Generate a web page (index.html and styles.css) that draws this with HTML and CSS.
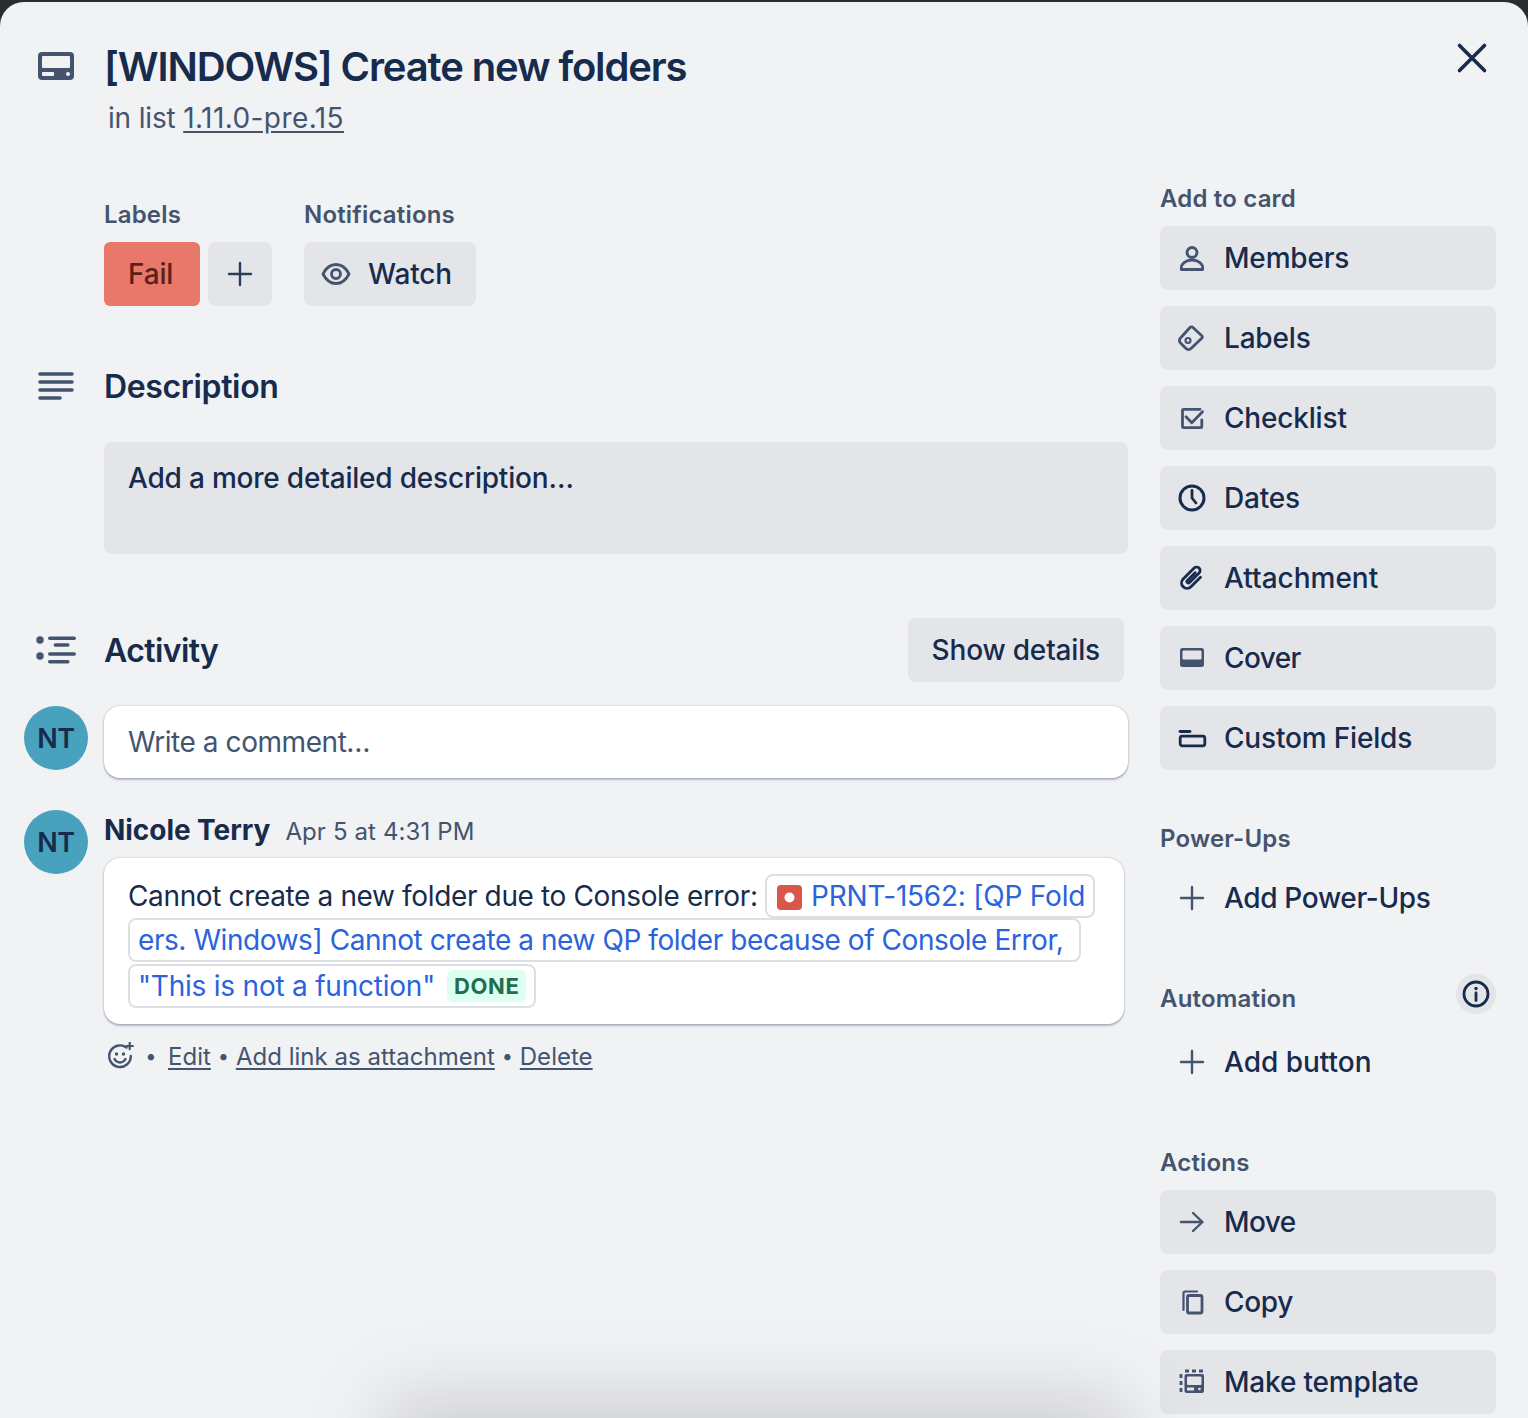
FILE: index.html
```html
<!DOCTYPE html>
<html lang="en">
<head>
<meta charset="utf-8">
<title>[WINDOWS] Create new folders</title>
<link rel="stylesheet" href="styles.css">
</head>
<body>
<div class="modal">
  <button class="close" aria-label="Close">
    <svg width="32" height="32" viewBox="0 0 32 32"><path d="M3.500 3.500l25 25M28.500 3.500l-25 25" class="st-dark st-35"/></svg>
  </button>

  <header class="head">
    <div class="gutter">
      <svg width="36" height="28" viewBox="0 0 36 28"><rect width="36" height="28" rx="4" class="f-sub"/><rect x="4" y="4" width="28" height="12" rx="1" class="f-page"/><rect x="4" y="20" width="12" height="4" rx="1" class="f-page"/><circle cx="30" cy="22" r="2" class="f-page"/></svg>
    </div>
    <div>
      <h1 class="title">[WINDOWS] Create new folders</h1>
      <p class="sub">in list <a class="u">1.11.0-pre.15</a></p>
    </div>
  </header>

  <div class="layout">
    <main class="main">
      <div class="meta">
        <div>
          <h3 class="cap">Labels</h3>
          <div class="meta-row">
            <span class="label">Fail</span>
            <button class="tile tile-sq"><svg width="32" height="32" viewBox="0 0 32 32"><path d="M16 5v22M5 16h22" class="st-mid st-24"/></svg></button>
          </div>
        </div>
        <div>
          <h3 class="cap">Notifications</h3>
          <div class="meta-row">
            <button class="btn btn-auto">
              <svg width="32" height="32" viewBox="0 0 32 32"><path d="M3 16c3-6 7.500-9.500 13-9.500S26 10 29 16c-3 6-7.500 9.500-13 9.500S6 22 3 16z" class="st-sub st-25"/><circle cx="16" cy="16" r="4.500" class="st-sub st-25"/></svg>
              Watch
            </button>
          </div>
        </div>
      </div>

      <section class="sec-desc">
        <div class="sec-head">
          <div class="gutter">
            <svg width="36" height="30" viewBox="0 0 36 30"><path d="M2 3h32M2 11h32M2 19h32M2 27h20" class="st-sub st-35"/></svg>
          </div>
          <h2 class="h2">Description</h2>
        </div>
        <div class="desc">Add a more detailed description…</div>
      </section>

      <section class="sec-act">
        <div class="sec-head">
          <div class="gutter">
            <svg width="42" height="30" viewBox="0 0 42 30"><circle cx="5" cy="5" r="3.700" class="f-sub"/><circle cx="5" cy="21" r="3.700" class="f-sub"/><path d="M14.800 3.300h24.400M20.400 10h12.400M14.800 19h24.400M14.800 26.700h18" class="st-sub st-35"/></svg>
          </div>
          <h2 class="h2 grow">Activity</h2>
          <button class="btn-text">Show details</button>
        </div>

        <div class="row row-write">
          <div class="avatar">NT</div>
          <div class="write">Write a comment…</div>
        </div>

        <div class="row row-comment">
          <div class="avatar">NT</div>
          <div class="comment-col">
            <div class="who"><strong class="name">Nicole Terry</strong><span class="time">Apr 5 at 4:31 PM</span></div>
            <div class="comment">Cannot create a new folder due to Console error: <a class="smart"><svg class="jira" width="25" height="25" viewBox="0 0 25 25"><rect width="25" height="25" rx="4" fill="#d9574a"/><circle cx="12.500" cy="12.500" r="5" fill="#fff"/></svg>PRNT-1562: [QP Fold<br><span class="tight">ers. Windows] Cannot create a new QP folder because of Console Error,&nbsp;</span><br>"This is not a function"<span class="done">DONE</span></a></div>
            <div class="actions">
              <svg class="emoji" width="28" height="28" viewBox="0 0 28 28"><path d="M20.500 5.600A10.800 10.800 0 1 0 24.800 14" class="st-sub st-24"/><circle cx="10.500" cy="12" r="1.700" class="f-sub"/><circle cx="17.500" cy="12" r="1.700" class="f-sub"/><path d="M8.500 17c1.300 2.300 3.300 3.500 5.500 3.500s4.200-1.200 5.500-3.500" class="st-sub st-24"/><path d="M23.700 0.800v6.400M20.500 4h6.400" class="st-sub st-2"/></svg>
              <span class="dot first">•</span><a class="u">Edit</a><span class="dot">•</span><a class="u">Add link as attachment</a><span class="dot">•</span><a class="u">Delete</a>
            </div>
          </div>
        </div>
      </section>
    </main>

    <aside class="side">
      <h3 class="cap">Add to card</h3>
      <div class="stack">
        <button class="btn"><svg width="32" height="32" viewBox="0 0 32 32"><circle cx="16" cy="10.500" r="5" class="st-sub st-25"/><path d="M5.300 27.500v-1.500c0-4.500 4.700-8 10.700-8s10.700 3.500 10.700 8v1.500z" class="st-sub st-25"/></svg>Members</button>
        <button class="btn"><svg width="32" height="32" viewBox="0 0 32 32"><path d="M14 5.500a2 2 0 0 1 3 0l9 8.500a1.500 1.500 0 0 1 0 2L15 26.500a3.500 3.500 0 0 1-5 0l-5.500-5.500a3.500 3.500 0 0 1 0-5z" class="st-sub st-25"/><circle cx="12" cy="18.500" r="2.500" class="st-sub st-2"/></svg>Labels</button>
        <button class="btn"><svg width="32" height="32" viewBox="0 0 32 32"><path d="M24 7.300H7.500a1 1 0 0 0-1 1v16.400a1 1 0 0 0 1 1h17.300a1 1 0 0 0 1-1V18" class="st-sub st-25"/><path d="M10 14.700l5.800 6L26.500 9.700" class="st-sub st-25"/></svg>Checklist</button>
        <button class="btn"><svg width="32" height="32" viewBox="0 0 32 32"><circle cx="16" cy="16" r="12" class="st-dark st-3"/><path d="M16 8.500V16l4 5" class="st-dark st-25"/></svg>Dates</button>
        <button class="btn ls-loose"><svg width="32" height="32" viewBox="0 0 32 32"><g transform="rotate(45 16 16)"><path d="M21.500 9.500V23a5.500 5.500 0 0 1-11 0V7.500a3.500 3.500 0 0 1 7 0V21a1.500 1.500 0 0 1-3 0V10" class="st-dark st-25"/></g></svg>Attachment</button>
        <button class="btn ls-tighter"><svg width="32" height="32" viewBox="0 0 32 32"><rect x="4" y="6" width="24" height="19" rx="2.500" class="f-sub"/><rect x="6.500" y="8.500" width="19" height="9" rx="1" class="f-tile"/></svg>Cover</button>
        <button class="btn"><svg width="32" height="32" viewBox="0 0 32 32"><path d="M4 9.500h10" class="st-dark st-25"/><rect x="4.200" y="14.200" width="24.600" height="9.600" rx="2" class="st-dark st-25"/></svg>Custom Fields</button>
      </div>

      <h3 class="cap cap-gap">Power-Ups</h3>
      <button class="btn btn-ghost ls-tight"><svg width="32" height="32" viewBox="0 0 32 32"><path d="M16 5v22M5 16h22" class="st-sub st-24"/></svg>Add Power-Ups</button>

      <div class="auto-head">
        <h3 class="cap">Automation</h3>
        <button class="info" aria-label="Info"><svg width="32" height="32" viewBox="0 0 32 32"><circle cx="16" cy="16" r="12" class="st-dark st-25"/><circle cx="16" cy="10.500" r="1.700" class="f-dark"/><path d="M16 15v7.500" class="st-dark st-25"/></svg></button>
      </div>
      <button class="btn btn-ghost btn-auto-add ls-loose"><svg width="32" height="32" viewBox="0 0 32 32"><path d="M16 5v22M5 16h22" class="st-sub st-24"/></svg>Add button</button>

      <h3 class="cap cap-gap">Actions</h3>
      <div class="stack">
        <button class="btn ls-tighter"><svg width="32" height="32" viewBox="0 0 32 32"><path d="M5 16h21.500M17 7l9.500 9-9.500 9" class="st-sub st-24"/></svg>Move</button>
        <button class="btn ls-tight"><svg width="32" height="32" viewBox="0 0 32 32"><rect x="11.500" y="9.500" width="14.500" height="17.500" rx="1.500" class="st-sub st-25"/><path d="M7.500 24V7a1.500 1.500 0 0 1 1.500-1.500h12" class="st-sub st-2"/></svg>Copy</button>
        <button class="btn"><svg width="32" height="32" viewBox="0 0 32 32"><path d="M5 8v18M9 5h18" class="st-sub st-25 dash"/><rect x="8.500" y="8" width="19.500" height="19" rx="2" class="f-sub"/><rect x="11" y="10.500" width="14.500" height="8.500" rx="1" class="f-tile"/><rect x="11" y="21.500" width="7" height="3" class="f-tile"/><circle cx="23.500" cy="23" r="1.300" class="f-tile"/></svg>Make template</button>
      </div>
    </aside>
  </div>
  <div class="below"></div>
</div>
</body>
</html>
```

FILE: styles.css
```css
* { box-sizing: border-box; }
html, body { margin: 0; height: 100%; }
body {
  background: #2a2c30;
  overflow: hidden;
  font-family: Inter, "Noto Sans", sans-serif;
  font-size: 28px;
  color: #172b4d;
  padding-top: 2px;
}
button { font: inherit; color: inherit; border: 0; background: none; padding: 0; cursor: pointer; }
h1, h2, h3, p { margin: 0; }
svg { display: block; flex: none; }
path, rect, circle { stroke-linecap: round; stroke-linejoin: round; }

.f-sub { fill: #44546f; }
.f-dark { fill: #172b4d; }
.f-page { fill: #f1f2f4; }
.f-tile { fill: #e4e5e9; }
.st-sub, .st-dark, .st-mid { fill: none; }
.st-sub { stroke: #44546f; }
.st-dark { stroke: #172b4d; }
.st-mid { stroke: #2c3e5d; }
.st-2 { stroke-width: 2.2px; }
.st-24 { stroke-width: 2.4px; }
.st-25 { stroke-width: 2.8px; }
.st-3 { stroke-width: 3px; }
.st-35 { stroke-width: 3.6px; }
.dash { stroke-dasharray: 4 3; stroke-linecap: butt; }

.modal {
  position: relative;
  height: 1416px;
  background: #f1f2f4;
  border-radius: 24px 24px 0 0;
  padding: 41px 32px 0 24px;
  overflow: hidden;
}
.close { position: absolute; top: 40px; right: 40px; }
.below {
  position: absolute;
  left: 385px;
  top: 1396px;
  width: 740px;
  height: 120px;
  background: rgba(0, 0, 0, .15);
  filter: blur(38px);
  pointer-events: none;
}

.gutter { width: 64px; margin-right: 16px; flex: none; display: flex; justify-content: center; }
.head { display: flex; }
.head .gutter { padding-top: 9px; }
.title { font-size: 40px; line-height: 48px; font-weight: 600; letter-spacing: -1.12px; }
.sub { font-size: 28px; line-height: 40px; margin: 7px 0 0 4px; color: #44546f; letter-spacing: -0.17px; }
.sub .u { letter-spacing: 0.42px; }
.u { text-decoration: underline; text-underline-offset: 3px; }

.layout { display: grid; grid-template-columns: 1104px 336px; column-gap: 32px; margin-top: 44px; }
.main { padding-top: 16px; }
.cap { font-size: 24px; line-height: 30px; height: 32px; padding-top: 2px; font-weight: 600; color: #44546f; letter-spacing: 0.18px; }

.meta { display: flex; gap: 32px; padding-left: 80px; }
.meta-row { display: flex; gap: 8px; margin-top: 12px; }
.label {
  height: 64px; width: 96px; padding-left: 24px;
  display: flex; align-items: center;
  background: #e8786a; color: #5d1f1a; font-weight: 500; border-radius: 6px;
  letter-spacing: -0.18px;
}
.tile { height: 64px; background: #e4e5e9; border-radius: 8px; display: flex; align-items: center; justify-content: center; }
.tile-sq { width: 64px; }

.btn {
  display: flex; align-items: center; gap: 16px;
  width: 100%; height: 64px; padding: 0 24px 0 16px;
  background: #e4e5e9; border-radius: 8px; font-weight: 500; text-align: left;
  letter-spacing: -0.18px;
}
.btn.ls-loose { letter-spacing: 0; }
.btn.ls-tight { letter-spacing: -0.34px; }
.btn.ls-tighter { letter-spacing: -0.6px; }
.btn-auto { width: auto; }
.btn-ghost { background: none; }
.btn-text { height: 64px; padding: 0 24px; margin-right: 4px; background: #e4e5e9; border-radius: 8px; font-weight: 500; letter-spacing: -0.18px; }

.sec-desc { margin-top: 60px; }
.sec-head { display: flex; align-items: center; }
.h2 { font-size: 32px; line-height: 38px; height: 40px; padding-top: 2px; font-weight: 600; letter-spacing: -0.35px; }
.grow { flex: 1; letter-spacing: -0.6px; }
.desc {
  margin: 36px 0 0 80px; height: 112px; padding: 16px 24px;
  line-height: 40px; font-weight: 500;
  background: #e4e5e9; border-radius: 8px;
  letter-spacing: -0.2px;
}
.sec-act { margin-top: 64px; }

.row { display: flex; align-items: flex-start; gap: 16px; }
.row-write { margin-top: 24px; }
.row-comment { margin-top: 32px; }
.avatar {
  width: 64px; height: 64px; flex: none; border-radius: 50%;
  background: #48a1bd; color: #172b4d; font-size: 27px; font-weight: 600;
  display: flex; align-items: center; justify-content: center;
  letter-spacing: -0.5px;
}
.write {
  flex: 1; height: 72px; padding: 0 24px;
  display: flex; align-items: center;
  background: #fff; color: #44546f; border-radius: 16px;
  box-shadow: 0 2px 2px rgba(9, 30, 66, .25), 0 0 2px rgba(9, 30, 66, .31);
  letter-spacing: -0.44px;
}
.comment-col { flex: 1; min-width: 0; }
.who { display: flex; align-items: baseline; gap: 15px; height: 48px; line-height: 40px; }
.name { font-weight: 700; letter-spacing: -0.05px; }
.time { font-size: 24px; color: #44546f; letter-spacing: 0.12px; }
.comment {
  width: 1020px; padding: 16px 24px;
  line-height: 44px;
  white-space: nowrap;
  letter-spacing: -0.36px;
  background: #fff; border-radius: 16px;
  box-shadow: 0 2px 2px rgba(9, 30, 66, .25), 0 0 2px rgba(9, 30, 66, .31);
}
.smart {
  color: #2a63dc;
  padding: 3px 8px;
  border: 2px solid #dcdfe4;
  border-radius: 8px;
  letter-spacing: -0.22px;
  -webkit-box-decoration-break: clone;
  box-decoration-break: clone;
}
.tight { letter-spacing: -0.43px; }
.jira { display: inline-block; vertical-align: -4px; margin: 0 9px 0 2px; }
.done {
  display: inline-block;
  margin: 8px 0 0 12px;
  padding: 0 7px;
  height: 32px; line-height: 32px;
  font-size: 22px; font-weight: 700;
  vertical-align: 2px;
  letter-spacing: 0.6px;
  color: #216e4e; background: #dcfff1; border-radius: 6px;
}
.actions { display: flex; align-items: center; height: 36px; margin-top: 14px; font-size: 24px; color: #44546f; letter-spacing: 0.02px; }
.emoji { margin-left: 2px; }
.dot { width: 25px; text-align: center; font-size: 20px; }
.dot.first { width: 34px; }

.side { display: flex; flex-direction: column; }
.stack { display: flex; flex-direction: column; gap: 16px; margin-top: 12px; }
.cap-gap { margin-top: 52px; }
.cap-gap + .btn { margin-top: 12px; }
.auto-head { display: flex; justify-content: space-between; align-items: flex-end; margin-top: 44px; }
.info { width: 40px; height: 40px; border-radius: 50%; background: #e4e5e9; display: flex; align-items: center; justify-content: center; }
.btn-auto-add { margin-top: 16px; }
```
